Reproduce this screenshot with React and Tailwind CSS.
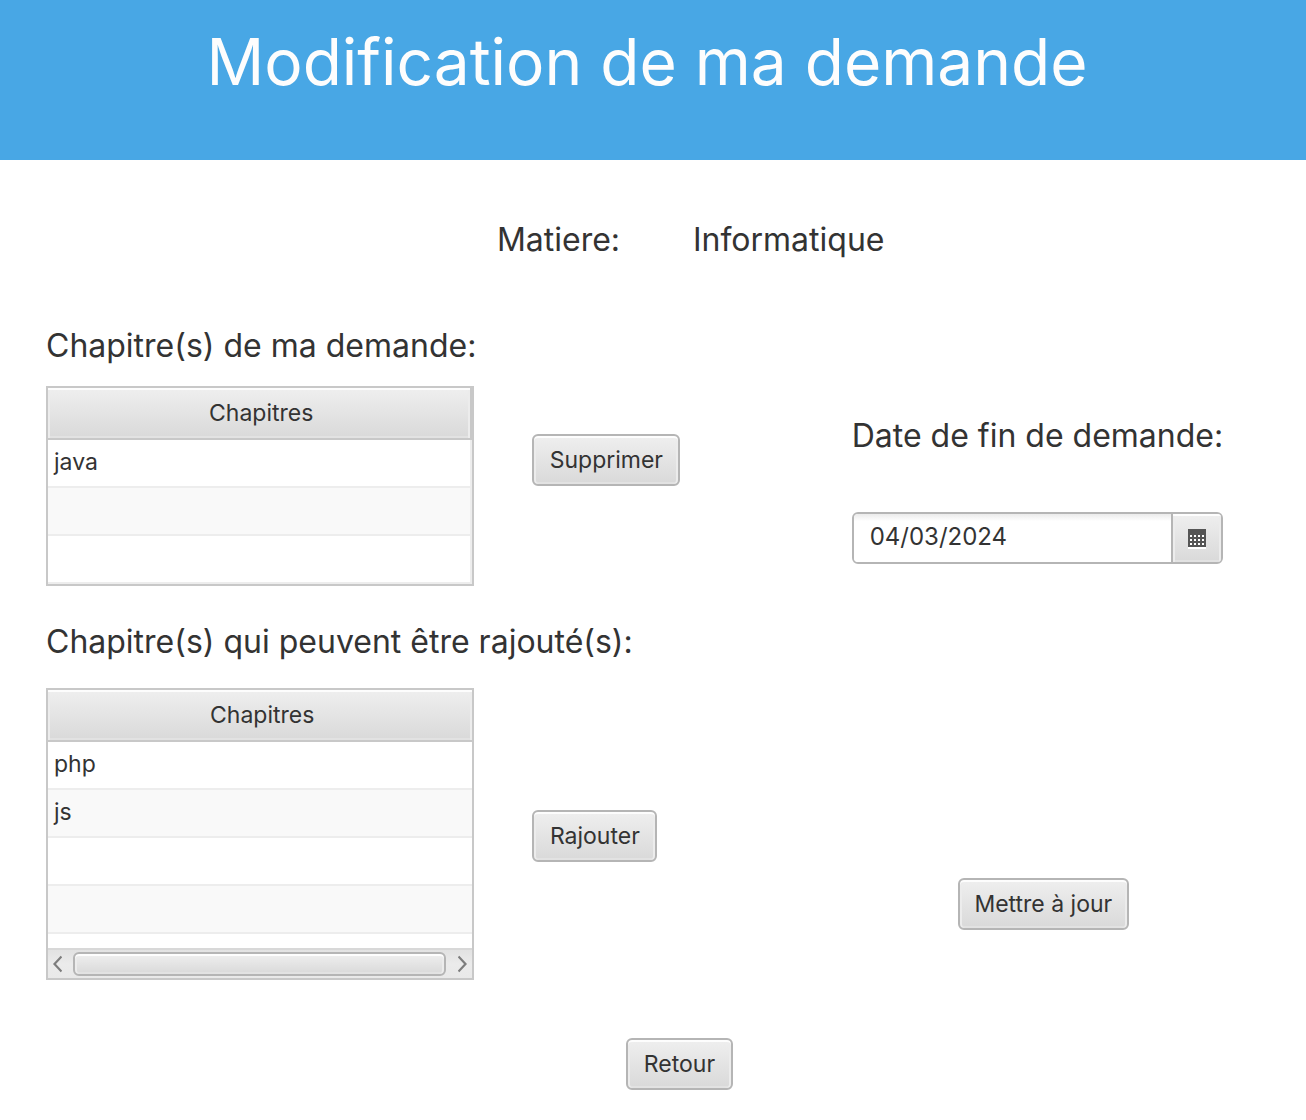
import { useState } from "react";

const raised =
  "bg-linear-to-b from-[#efefef] to-[#d9d9d9] shadow-[inset_0_2px_0_#fdfdfd,inset_2px_0_0_#ececec,inset_-2px_0_0_#ececec,inset_0_-2px_0_#e2e2e2]";

function Button({ children, className = "" }) {
  return (
    <button
      type="button"
      className={`h-[52px] shrink-0 whitespace-nowrap rounded-md border-2 border-[#b5b5b5] text-[23px] leading-8 ${raised} ${className}`}
    >
      {children}
    </button>
  );
}

function ChapterTable({ labelId, rows, gutter, children }) {
  return (
    <div className="w-[53.17%] shrink-0 border-2 border-[#c8c8c8]">
      <table aria-labelledby={labelId} className="w-full border-separate border-spacing-0 text-[23px] leading-8">
        <thead>
          <tr>
            <th
              scope="col"
              className={`h-[52px] border-b-2 border-[#c8c8c8] py-0 pl-1 pr-0 text-center font-normal ${gutter ? "border-r-2" : ""} ${raised}`}
            >
              Chapitres
            </th>
          </tr>
        </thead>
        <tbody>
          {rows.map((row, i) => (
            <tr key={i}>
              <td
                className={`h-12 border-b-2 border-[#ededed] px-1.5 py-0 pb-0.5 ${gutter ? "border-r-2" : ""} ${i % 2 ? "bg-[#f9f9f9]" : "bg-white"}`}
              >
                {row}
              </td>
            </tr>
          ))}
        </tbody>
      </table>
      {children}
    </div>
  );
}

function Chevron({ d }) {
  return (
    <svg width="10" height="18" viewBox="0 0 10 18" fill="none" stroke="#7d7d7d" strokeWidth="2.2">
      <path d={d} />
    </svg>
  );
}

function HorizontalScrollbar() {
  return (
    <div className="flex h-[30px] items-center border-t-2 border-[#d8d8d8] bg-linear-to-b from-[#e2e2e2] via-[#ebebeb] to-[#e9e9e9] px-1">
      <button type="button" aria-label="Défiler à gauche" className="w-[21px] shrink-0">
        <Chevron d="M9.5 1.5 L2.5 9 L9.5 16.5" />
      </button>
      <div className="h-6 grow rounded-md border-2 border-[#b5b5b5] bg-linear-to-b from-[#efefef] to-[#d9d9d9] shadow-[inset_0_2px_0_#fdfdfd,inset_2px_0_0_#ececec,inset_-2px_0_0_#ececec,inset_0_-2px_0_#e2e2e2]" />
      <button type="button" aria-label="Défiler à droite" className="flex w-[22px] shrink-0 justify-end">
        <Chevron d="M0.5 1.5 L7.5 9 L0.5 16.5" />
      </button>
    </div>
  );
}

function CalendarIcon() {
  return (
    <svg width="18" height="20" viewBox="0 0 18 20" shapeRendering="crispEdges">
      <rect y="2" width="18" height="18" fill="#fff" />
      <rect width="18" height="18" fill="#555" />
      {[6, 10, 14].map((y) =>
        [2, 6, 10, 14].map((x) => (
          <rect key={`${x}-${y}`} x={x} y={y} width="2" height="2" fill="#fff" />
        ))
      )}
    </svg>
  );
}

export default function App() {
  const [date, setDate] = useState("04/03/2024");
  return (
    <div className="min-h-screen bg-white font-['Inter',sans-serif] text-[#333]">
      <header className="h-40 bg-[#48a7e5] pr-3 pt-5 text-center">
        <h1 className="text-[64px] leading-[84px] text-[#fdfdfd]">Modification de ma demande</h1>
      </header>

      <main className="pb-[30px] text-[32px] leading-10">
        <div className="flex pl-[38.05%] pt-[60px]">
          <p className="w-[196px]">Matiere:</p>
          <p>Informatique</p>
        </div>

        <div className="mt-[66px] grid grid-cols-[805fr_371fr] pl-[46px] pr-[83px]">
          <div className="min-w-0">
            <h2 id="current-chapters">Chapitre(s) de ma demande:</h2>
            <div className="mt-5 flex items-start gap-[58px]">
              <ChapterTable labelId="current-chapters" rows={["java", "", ""]} gutter />
              <Button className="mt-12 w-[148px]">Supprimer</Button>
            </div>

            <h2 id="available-chapters" className="mt-9">
              Chapitre(s) qui peuvent être rajouté(s):
            </h2>
            <div className="mt-[26px] flex items-start gap-[58px]">
              <ChapterTable labelId="available-chapters" rows={["php", "js", "", ""]}>
                <div className="h-3.5 bg-white" />
                <HorizontalScrollbar />
              </ChapterTable>
              <Button className="mt-[122px] w-[125px]">Rajouter</Button>
            </div>
          </div>

          <div className="min-w-0 pt-[90px]">
            <label htmlFor="end-date" className="block whitespace-nowrap">
              Date de fin de demande:
            </label>
            <div className="mt-14 flex h-[52px] overflow-hidden rounded-md border-2 border-[#b5b5b5]">
              <input
                id="end-date"
                type="text"
                value={date}
                onChange={(e) => setDate(e.target.value)}
                className="min-w-0 grow bg-linear-to-b from-[#ebebeb] to-white to-15% px-4 pb-0.5 text-2xl outline-none"
              />
              <button
                type="button"
                aria-label="Choisir une date"
                className={`flex w-[50px] shrink-0 items-center justify-center border-l-2 border-[#b5b5b5] pt-0.5 ${raised}`}
              >
                <CalendarIcon />
              </button>
            </div>
            <div className="mt-[314px] flex justify-center pl-3">
              <Button className="w-[171px]">Mettre à jour</Button>
            </div>
          </div>
        </div>

        <div className="mt-[58px] flex pl-[47.93%]">
          <Button className="w-[107px]">Retour</Button>
        </div>
      </main>
    </div>
  );
}
